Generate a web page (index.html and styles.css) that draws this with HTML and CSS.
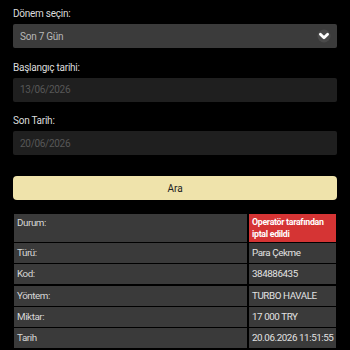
FILE: index.html
```html
<!DOCTYPE html>
<html lang="tr">
<head>
<meta charset="utf-8">
<link rel="stylesheet" href="styles.css">
</head>
<body>
<div class="page">
  <div class="field">
    <div class="label">Dönem seçin:</div>
    <div class="select">
      <span>Son 7 Gün</span>
      <svg class="chev" width="16" height="16" viewBox="0 0 16 16">
        <circle cx="8" cy="8" r="6.5" fill="rgba(255,255,255,0.08)"/>
        <path d="M4.4 6.2 L8 9.8 L11.6 6.2" fill="none" stroke="#fff" stroke-width="2.8" stroke-linecap="round" stroke-linejoin="round"/>
      </svg>
    </div>
  </div>
  <div class="field">
    <div class="label">Başlangıç tarihi:</div>
    <div class="input">13/06/2026</div>
  </div>
  <div class="field">
    <div class="label">Son Tarih:</div>
    <div class="input">20/06/2026</div>
  </div>
  <button class="btn">Ara</button>
  <div class="table">
    <div class="cell k tall">Durum:</div>
    <div class="cell v status">Operatör tarafından iptal edildi</div>
    <div class="cell k">Türü:</div>
    <div class="cell v">Para Çekme</div>
    <div class="cell k">Kod:</div>
    <div class="cell v">384886435</div>
    <div class="cell k">Yöntem:</div>
    <div class="cell v">TURBO HAVALE</div>
    <div class="cell k">Miktar:</div>
    <div class="cell v">17 000 TRY</div>
    <div class="cell k">Tarih</div>
    <div class="cell v">20.06.2026 11:51:55</div>
  </div>
</div>
</body>
</html>
```
FILE: styles.css
```css
html, body {
  margin: 0;
  padding: 0;
  background: #000;
}
body {
  font-family: Roboto, "Noto Sans", sans-serif;
  color: #e0e0e0;
}
.page {
  padding: 8px 13px 0;
  display: flex;
  flex-direction: column;
}
.field {
  display: flex;
  flex-direction: column;
  gap: 4px;
  margin-bottom: 13.5px;
}
.label {
  font-size: 10px;
  line-height: 12px;
  letter-spacing: -0.25px;
  color: #dcdcdc;
}
.select {
  height: 24px;
  background: #3b3b3b;
  border-radius: 2px;
  display: flex;
  align-items: center;
  justify-content: space-between;
  padding: 0 5px 0 7px;
  font-size: 10px;
  letter-spacing: -0.25px;
  color: #b8b8b8;
}
.chev {
  display: block;
}
.input {
  height: 24px;
  background: #1f1f1f;
  border-radius: 2px;
  display: flex;
  align-items: center;
  padding: 0 7px;
  font-size: 10px;
  letter-spacing: -0.3px;
  color: #575757;
}
.btn {
  margin-top: 7.5px;
  height: 24px;
  border: none;
  border-radius: 4px;
  background: #efe3ab;
  color: #222;
  font-family: Roboto, "Noto Sans", sans-serif;
  font-size: 10px;
  padding: 0;
}
.table {
  margin: 14px 1px 0;
  display: grid;
  grid-template-columns: 1fr 87px;
  column-gap: 2px;
  row-gap: 1.2px;
}
.cell {
  background: #3a3a3a;
  font-size: 9.8px;
  letter-spacing: -0.42px;
  line-height: 14px;
  padding: 3px 3px;
  color: #e2e2e2;
  white-space: nowrap;
}
.cell.k {
  color: #d8d8d8;
}
.tall {
  padding-top: 2px;
}
.status {
  background: #d53434;
  color: #fff;
  font-weight: 700;
  font-size: 8.8px;
  letter-spacing: -0.3px;
  line-height: 12px;
  padding: 2px 3px 2px;
  white-space: normal;
}
```
